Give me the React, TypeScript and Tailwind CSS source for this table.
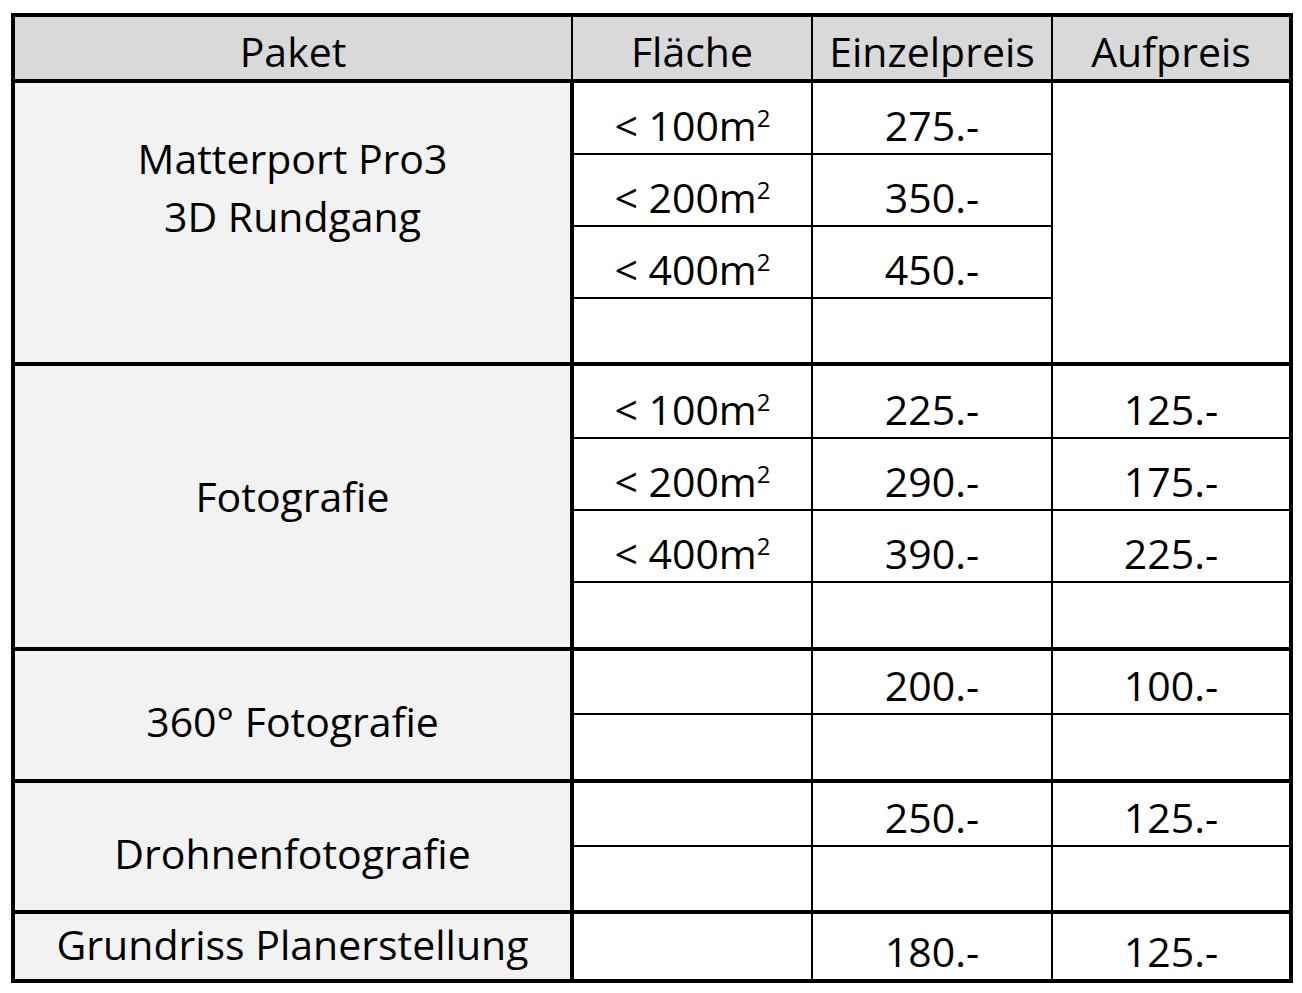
import React from "react";

type Sub = { area?: string; price?: string; extra?: string; h: number };
type Group = { name: string[]; pad: string; lead: string; subs: Sub[]; extraSpan?: boolean };

const groups: Group[] = [
  {
    name: ["Matterport Pro3", "3D Rundgang"],
    pad: "pt-[46px]",
    lead: "leading-[58px]",
    extraSpan: true,
    subs: [
      { area: "100", price: "275.-", h: 73 },
      { area: "200", price: "350.-", h: 72 },
      { area: "400", price: "450.-", h: 72 },
      { h: 66 },
    ],
  },
  {
    name: ["Fotografie"],
    pad: "pt-[110px]",
    lead: "leading-[40px]",
    subs: [
      { area: "100", price: "225.-", extra: "125.-", h: 74 },
      { area: "200", price: "290.-", extra: "175.-", h: 72 },
      { area: "400", price: "390.-", extra: "225.-", h: 72 },
      { h: 67 },
    ],
  },
  {
    name: ["360° Fotografie"],
    pad: "pt-[50px]",
    lead: "leading-[40px]",
    subs: [
      { price: "200.-", extra: "100.-", h: 65 },
      { h: 67 },
    ],
  },
  {
    name: ["Drohnenfotografie"],
    pad: "pt-[50px]",
    lead: "leading-[40px]",
    subs: [
      { price: "250.-", extra: "125.-", h: 65 },
      { h: 66 },
    ],
  },
  {
    name: ["Grundriss Planerstellung"],
    pad: "pt-[10px]",
    lead: "leading-[40px]",
    subs: [{ price: "180.-", extra: "125.-", h: 69 }],
  },
];

function Area({ v }: { v?: string }) {
  if (!v) return null;
  return (
    <span>
      &lt; {v}m<sup className="text-[24px] -top-[14px]">2</sup>
    </span>
  );
}

export default function App() {
  return (
    <div
      className="min-h-[993px] bg-white text-black pt-[13px] pl-[11px]"
      style={{ fontFamily: "'Open Sans', 'Noto Sans', sans-serif" }}
    >
      <table className="table-fixed border-collapse border-4 border-black w-[1278px] text-[41px] leading-[40px]">
        <colgroup>
          <col className="w-[559px]" />
          <col className="w-[240px]" />
          <col className="w-[240px]" />
          <col className="w-[239px]" />
        </colgroup>
        <thead>
          <tr className="h-[66px] bg-[#d9d9d9]">
            <th className="font-normal border-2 border-b-4 border-black text-center align-top pt-[14px]">Paket</th>
            <th className="font-normal border-2 border-b-4 border-black text-center align-top pt-[14px]">Fläche</th>
            <th className="font-normal border-2 border-b-4 border-black text-center align-top pt-[14px]">Einzelpreis</th>
            <th className="font-normal border-2 border-b-4 border-black text-center align-top pt-[14px]">Aufpreis</th>
          </tr>
        </thead>
        <tbody>
          {groups.map((g) =>
            g.subs.map((s, i) => (
              <tr key={g.name[0] + i} style={{ height: s.h }}>
                {i === 0 && (
                  <td
                    rowSpan={g.subs.length}
                    className={`bg-[#f2f2f2] border-4 border-black text-center align-top ${g.lead} ${g.pad}`}
                  >
                    {g.name.map((n) => (
                      <div key={n}>{n}</div>
                    ))}
                  </td>
                )}
                <td
                  className={`border-2 border-black text-center align-bottom pb-[8px] ${
                    i === 0 ? "border-t-4" : ""
                  }`}
                >
                  <Area v={s.area} />
                </td>
                <td
                  className={`border-2 border-black text-center align-bottom pb-[8px] ${
                    i === 0 ? "border-t-4" : ""
                  }`}
                >
                  {s.price}
                </td>
                {g.extraSpan ? (
                  i === 0 && (
                    <td
                      rowSpan={g.subs.length}
                      className="border-2 border-t-4 border-b-4 border-black"
                    />
                  )
                ) : (
                  <td
                    className={`border-2 border-black text-center align-bottom pb-[8px] ${
                      i === 0 ? "border-t-4" : ""
                    }`}
                  >
                    {s.extra}
                  </td>
                )}
              </tr>
            ))
          )}
        </tbody>
      </table>
    </div>
  );
}
